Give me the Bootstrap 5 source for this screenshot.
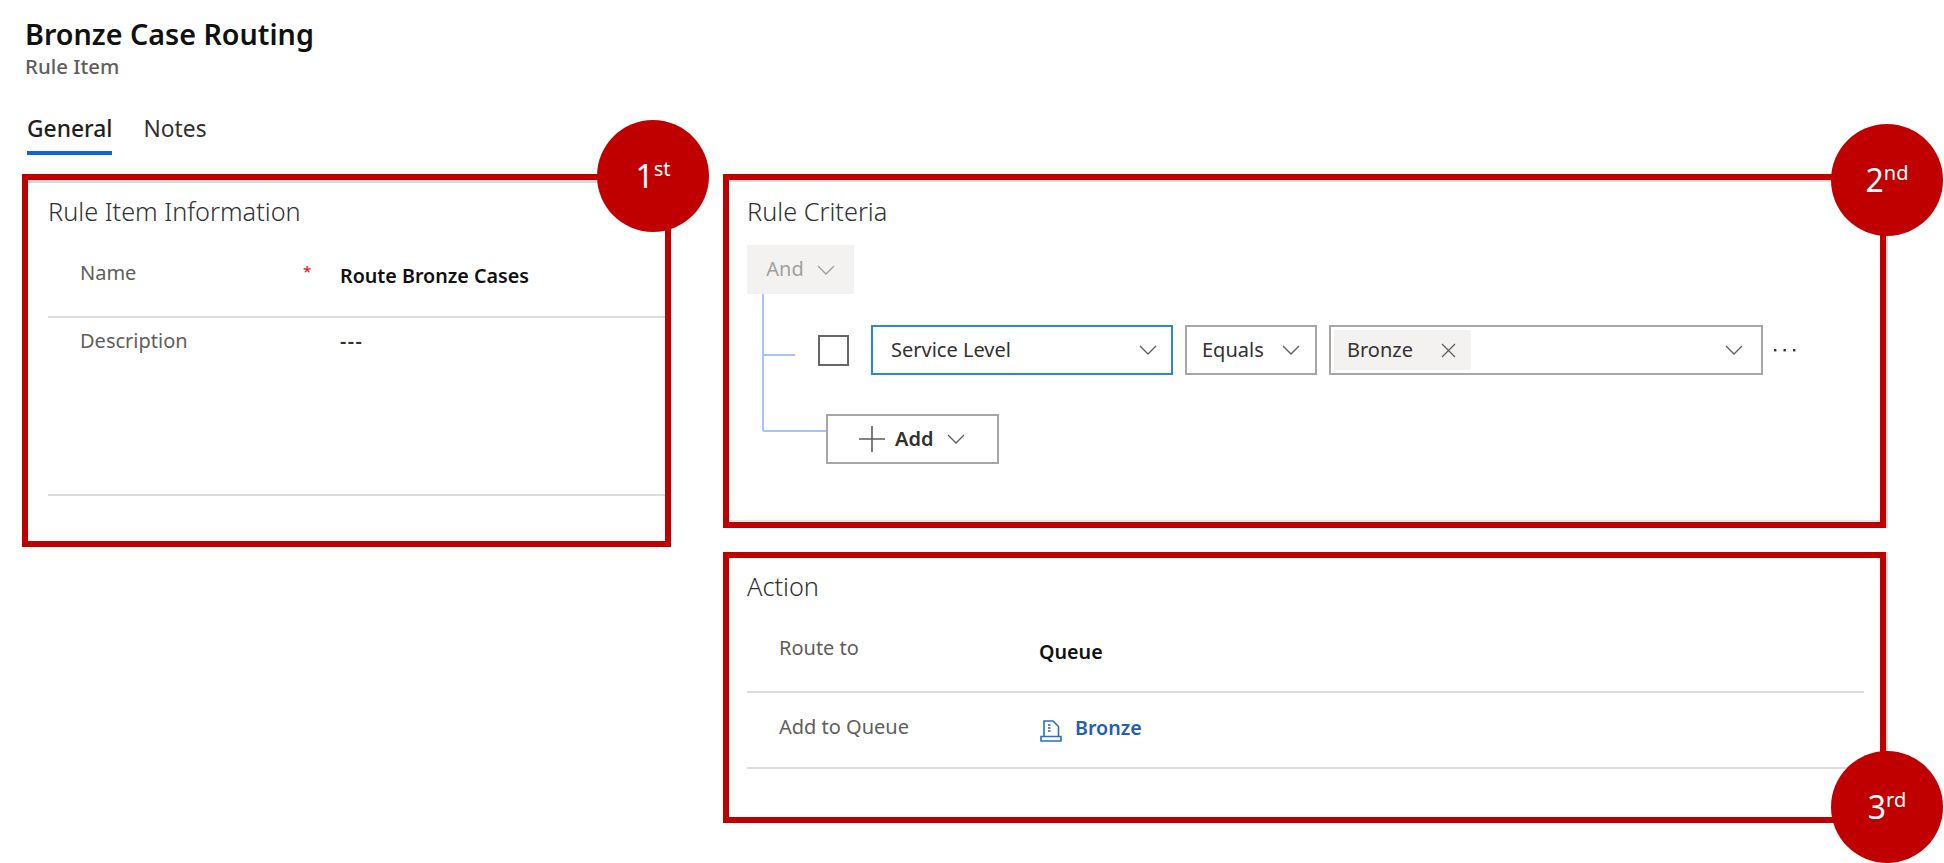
<!DOCTYPE html>
<html lang="en">
<head>
<meta charset="utf-8">
<title>Bronze Case Routing</title>
<link href="https://cdn.jsdelivr.net/npm/bootstrap@5.3.0/dist/css/bootstrap.min.css" rel="stylesheet">
<style>
html,body{height:863px;overflow:hidden;background:#fff}
body{font-family:"Noto Sans","Open Sans","Liberation Sans",sans-serif;color:#323130;font-size:20px}
.page{padding:0 0 0 22px;width:1944px}
.head-area{height:174px;padding-left:3px}
.page-title{font-size:28.7px;font-weight:600;line-height:34px;color:#111;padding-top:17px;margin:0}
.page-sub{font-size:20.4px;font-weight:500;line-height:24px;color:#605e5c;margin-top:3px}
.tabs-row{margin-top:36px;gap:31px;padding-left:2px}
.tab-item{font-size:22.8px;line-height:30px;color:#323130;padding-bottom:7px;border-bottom:4.5px solid transparent}
.tab-item.is-on{font-weight:500;color:#201f1e;border-bottom-color:#0f62e6}
.frame{border:6px solid #c00000;position:relative;background:#fff}
.frame-a{width:649px;height:373px;box-shadow:inset 0 3px 0 #d8d8d8}
.frame-b{width:1163px;height:354px;box-shadow:inset 0 2px 0 #dcdcdc,inset 0 -2px 0 #e4e4e4,2px 0 0 #dcdcdc}
.frame-c{width:1163px;height:271px;margin-top:24px;box-shadow:2px 0 0 #dcdcdc}
.frames-gap{gap:52px}
.sect-title{font-size:25.3px;font-weight:300;line-height:30px;color:#323130;margin:0;padding:16px 0 0 20px}
.frame-b .sect-title{padding-left:18px}
.frame-c .sect-title{padding:13px 0 0 18px}
.field-list{padding:0 0 0 20px;margin-top:22px}
.frame-b .field-list,.frame-c .field-list{padding:0 16px 0 18px}
.field-row{display:flex;border-bottom:2px solid #dcdcdc}
.lbl{width:255px;padding-left:32px;color:#605e5c;font-size:20px;line-height:24px;flex:none}
.req{width:37px;color:#e00000;font-size:15px;line-height:20px;flex:none}
.val{font-size:19.7px;line-height:24px;font-weight:600;color:#111}
.r1{height:70px;padding-top:13px}
.r1 .val{padding-top:3px}
.frame-c .r1 .val{padding-top:4px}
.r2{height:178px;padding-top:11px}
.r2 .val{font-weight:600;letter-spacing:1.5px;color:#323130}
.r3{height:76px;padding-top:22px}
.r3 .val{color:#1f5fb4;display:flex;align-items:flex-start;margin-top:1px}
.queue-ic{width:24px;height:22px;margin-right:12px;margin-top:4px;flex:none}
.and-box{width:107px;height:49px;background:#f3f2f1;color:#a19f9d;margin:19px 0 0 18px;gap:13px}
.and-box span{position:relative;top:-1px}
.tree{margin-left:18px;height:170px;background:linear-gradient(#a6c4fb,#a6c4fb) no-repeat 15px 0/2px 137px}
.crit-row{height:50px;padding-top:31px;box-sizing:content-box}
.branch{border-top:2px solid #a6c4fb;flex:none;margin-left:16px}
.branch-a{width:32px;margin-top:29px;margin-right:23px}
.branch-b{width:63px;margin-top:16px}
.chk{width:31px;height:31px;border:2px solid #666;margin-top:10px;margin-right:22px;flex:none}
.sel{height:50px;border:2px solid #a6a6a6;font-size:20px;color:#323130;flex:none}
.sel-a{width:302px;border-color:#2b88d8;padding:0 14px 0 18px}
.sel-b{width:132px;margin-left:12px;padding:0 15px}
.sel-c{width:434px;margin-left:12px;padding:0 18px 0 3px}
.tag{width:137px;height:40px;background:#f3f2f1;padding:0 15px 0 13px}
.dots{margin-left:11px;flex:none}
.add-row{margin-top:39px}
.add-btn{width:173px;height:50px;border:2px solid #a6a6a6;background:#fff;font-weight:600;font-size:20px;color:#323130;padding:0 0 0 31px;border-radius:0}
.add-btn span{margin-left:2px}
.add-chev{margin-left:14px}
.pin{position:absolute;width:112px;height:112px;border-radius:50%;background:#c00000;color:#fff;font-size:32px;line-height:1}
.pin sup{font-size:20px;top:-.6em}
.pin-1{left:569px;top:-60px}
.pin-2{left:1102px;top:-56px}
.pin-3{left:1102px;top:193px}
</style>
</head>
<body>
<div class="page">
  <div class="head-area">
    <h1 class="page-title">Bronze Case Routing</h1>
    <div class="page-sub">Rule Item</div>
    <div class="d-flex tabs-row">
      <div class="tab-item is-on">General</div>
      <div class="tab-item">Notes</div>
    </div>
  </div>
  <div class="d-flex align-items-start frames-gap">
    <section class="frame frame-a">
      <h2 class="sect-title">Rule Item Information</h2>
      <div class="field-list">
        <div class="field-row r1"><div class="lbl">Name</div><div class="req">*</div><div class="val">Route Bronze Cases</div></div>
        <div class="field-row r2"><div class="lbl">Description</div><div class="req"></div><div class="val">---</div></div>
      </div>
      <div class="pin pin-1 d-flex align-items-center justify-content-center"><span>1<sup>st</sup></span></div>
    </section>
    <div>
      <section class="frame frame-b">
        <h2 class="sect-title">Rule Criteria</h2>
        <div class="and-box d-flex align-items-center justify-content-center">
          <span>And</span>
          <svg width="18" height="10" viewBox="0 0 18 10" fill="none" stroke="#a19f9d" stroke-width="1.3"><path d="M1 1l8 8 8-8"/></svg>
        </div>
        <div class="tree">
          <div class="crit-row d-flex align-items-start">
            <div class="branch branch-a"></div>
            <div class="chk"></div>
            <div class="sel sel-a d-flex align-items-center justify-content-between">
              <span>Service Level</span>
              <svg width="18" height="10" viewBox="0 0 18 10" fill="none" stroke="#605e5c" stroke-width="1.3"><path d="M1 1l8 8 8-8"/></svg>
            </div>
            <div class="sel sel-b d-flex align-items-center justify-content-between">
              <span>Equals</span>
              <svg width="18" height="10" viewBox="0 0 18 10" fill="none" stroke="#605e5c" stroke-width="1.3"><path d="M1 1l8 8 8-8"/></svg>
            </div>
            <div class="sel sel-c d-flex align-items-center justify-content-between">
              <div class="tag d-flex align-items-center justify-content-between">
                <span>Bronze</span>
                <svg width="15" height="15" viewBox="0 0 15 15" fill="none" stroke="#605e5c" stroke-width="1.3"><path d="M1 1l13 13M14 1L1 14"/></svg>
              </div>
              <svg width="18" height="10" viewBox="0 0 18 10" fill="none" stroke="#605e5c" stroke-width="1.3"><path d="M1 1l8 8 8-8"/></svg>
            </div>
            <svg class="dots align-self-center" width="22" height="4" viewBox="0 0 22 4" fill="#323130"><rect x="0" y="1" width="2.4" height="2.4"/><rect x="9.5" y="1" width="2.4" height="2.4"/><rect x="19" y="1" width="2.4" height="2.4"/></svg>
          </div>
          <div class="add-row d-flex align-items-start">
            <div class="branch branch-b"></div>
            <button type="button" class="btn add-btn d-flex align-items-center">
              <svg width="26" height="26" viewBox="0 0 26 26" fill="none" stroke="#605e5c" stroke-width="1.6" class="me-2"><path d="M0 13h26M13 0v26"/></svg>
              <span>Add</span>
              <svg width="18" height="10" viewBox="0 0 18 10" fill="none" stroke="#605e5c" stroke-width="1.3" class="add-chev"><path d="M1 1l8 8 8-8"/></svg>
            </button>
          </div>
        </div>
        <div class="pin pin-2 d-flex align-items-center justify-content-center"><span>2<sup>nd</sup></span></div>
      </section>
      <section class="frame frame-c">
        <h2 class="sect-title">Action</h2>
        <div class="field-list">
          <div class="field-row r1 rc"><div class="lbl">Route to</div><div class="req"></div><div class="val">Queue</div></div>
          <div class="field-row r3"><div class="lbl">Add to Queue</div><div class="req"></div>
            <div class="val">
              <svg class="queue-ic" viewBox="0 0 24 22" fill="none" stroke="#2b6fc4" stroke-width="1.6"><path d="M5 16V1h9l5.5 5.5V16"/><path d="M2 16.5h20v4.5H2z"/><path d="M9 5h2.5M9 8h2.5M9 11h2.5" stroke="#1f5fb4"/></svg>
              <span>Bronze</span>
            </div>
          </div>
        </div>
        <div class="pin pin-3 d-flex align-items-center justify-content-center"><span>3<sup>rd</sup></span></div>
      </section>
    </div>
  </div>
</div>
<script src="https://cdn.jsdelivr.net/npm/bootstrap@5.3.0/dist/js/bootstrap.bundle.min.js"></script>
</body>
</html>
